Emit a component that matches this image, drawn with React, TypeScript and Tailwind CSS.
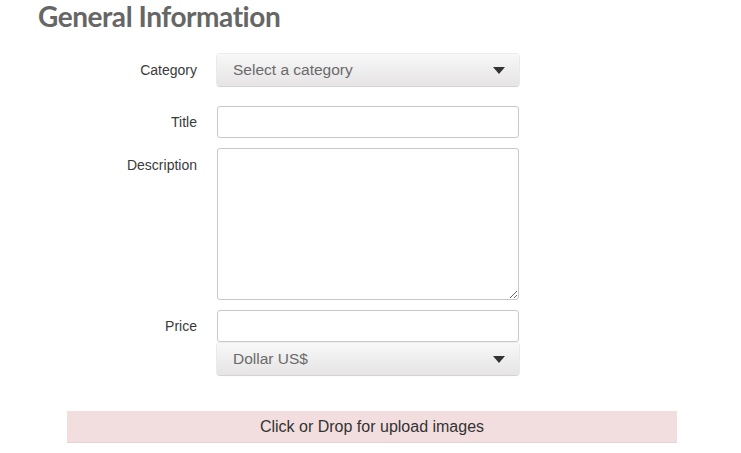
function Caret() {
  return (
    <svg width="12" height="7" viewBox="0 0 12 7" className="shrink-0">
      <path d="M0 0H12L6 7Z" fill="#333" />
    </svg>
  )
}

function SelectBox({ text }: { text: string }) {
  return (
    <div className="w-[302px] h-[32px] rounded-[3px] bg-gradient-to-b from-[#f8f8f8] to-[#e6e4e4] shadow-[0_1px_1px_rgba(0,0,0,0.12),0_0_0_1px_rgba(0,0,0,0.07)] flex items-center justify-between pl-[16px] pr-[14px]">
      <span className="text-[15.5px] text-[#6a6a6a]">{text}</span>
      <Caret />
    </div>
  )
}

function Label({ children, top }: { children: string; top?: boolean }) {
  return (
    <div className={`w-[197px] text-right text-[14px] text-[#3a3a3a] ${top ? 'pt-[7px]' : 'self-center'}`}>
      {children}
    </div>
  )
}

export default function App() {
  return (
    <div className="w-[741px] h-[453px] bg-white overflow-hidden" style={{ fontFamily: '"Liberation Sans", Arial, sans-serif' }}>
      <h1 className="pl-[38px] h-[34px] text-[28px] leading-[32px] font-bold text-[#666] tracking-[-0.45px]" style={{ fontFamily: 'Lato, sans-serif' }}>
        General Information
      </h1>
      <div className="pt-[20px] flex flex-col">
        <div className="flex gap-[20px]">
          <Label>Category</Label>
          <SelectBox text="Select a category" />
        </div>
        <div className="flex gap-[20px] mt-[20px]">
          <Label>Title</Label>
          <input className="w-[302px] h-[32px] border border-[#c8c8c8] rounded-[3px] bg-white" />
        </div>
        <div className="flex gap-[20px] mt-[10px]">
          <Label top>Description</Label>
          <textarea className="w-[302px] h-[152px] border border-[#c8c8c8] rounded-[3px] bg-white" />
        </div>
        <div className="flex gap-[20px] mt-[10px]">
          <Label>Price</Label>
          <input className="w-[302px] h-[32px] border border-[#c8c8c8] rounded-[3px] bg-white" />
        </div>
        <div className="flex gap-[20px] mt-[1px]">
          <div className="w-[197px]" />
          <SelectBox text="Dollar US$" />
        </div>
      </div>
      <div className="ml-[67px] mt-[36px] w-[610px] h-[32px] bg-[#f2dede] border-b border-[#e4d4d4] flex items-center justify-center text-[16px] text-[#333]">
        Click or Drop for upload images
      </div>
    </div>
  )
}
